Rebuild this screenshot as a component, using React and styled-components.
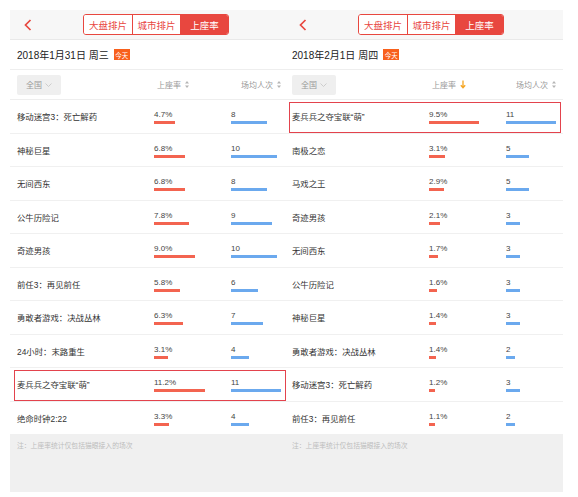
import styled, { createGlobalStyle } from "styled-components"

const GlobalStyle = createGlobalStyle`
  * { box-sizing: border-box; }
  body {
    margin: 0;
    background: #fff;
    font-family: "Liberation Sans", "Noto Sans CJK SC", sans-serif;
  }
`

const RED = "#e8473f"

const Page = styled.div`
  display: flex;
  padding: 10px 0 0 10px;
`
const Panel = styled.div`
  width: ${p => p.$w}px;
  display: flex;
  flex-direction: column;
`
const TopBar = styled.div`
  height: 30px;
  background: #f7f7f7;
  border-bottom: 1px solid #e9e9e9;
  display: grid;
  grid-template-columns: 1fr auto 1fr;
  align-items: center;
  padding-left: ${p => p.$pad + 7}px;
`
const Back = styled.svg`
  display: block;
`
const Segments = styled.div`
  display: flex;
  border: 1px solid ${RED};
  border-radius: 3px;
  overflow: hidden;
`
const Seg = styled.div`
  width: 48px;
  height: 19px;
  display: flex;
  align-items: center;
  justify-content: center;
  font-size: 9.5px;
  color: ${p => (p.$active ? "#fff" : RED)};
  background: ${p => (p.$active ? RED : "#fff")};
  & + & {
    border-left: 1px solid ${RED};
  }
`
const DateRow = styled.div`
  height: 30px;
  border-bottom: 1px solid #eeeeee;
  display: flex;
  align-items: center;
  padding-left: ${p => p.$pad}px;
  font-size: 10px;
  color: #222;
`
const Badge = styled.span`
  margin-left: 5px;
  width: 16px;
  height: 11px;
  background: #f8601c;
  color: #fff;
  font-size: 6.5px;
  display: inline-flex;
  align-items: center;
  justify-content: center;
`
const HeadRow = styled.div`
  height: 30px;
  border-bottom: 1px solid #eeeeee;
  display: grid;
  grid-template-columns: 137px 77px 1fr;
  align-items: center;
  padding-left: ${p => p.$pad}px;
  font-size: 8px;
  color: #999;
`
const Region = styled.div`
  width: 44px;
  height: 20px;
  background: #efefef;
  border-radius: 2px;
  display: flex;
  align-items: center;
  padding-left: 9px;
  gap: 3px;
  color: #999;
`
const HeadLabel = styled.div`
  display: flex;
  align-items: center;
  gap: 4px;
  padding-left: ${p => p.$indent}px;
`
const Row = styled.div`
  height: 33.5px;
  border-bottom: 1px solid #f0f0f0;
  display: grid;
  grid-template-columns: 137px 77px 1fr;
  padding-left: ${p => p.$pad}px;
  position: relative;
  ${p =>
    p.$hl &&
    `&::after {
      content: "";
      position: absolute;
      top: 2px; bottom: 0; left: ${p.$pad - 3}px; right: 2px;
      border: 1px solid #e3434d;
    }`}
`
const Name = styled.div`
  align-self: center;
  font-size: 8.4px;
  color: #333;
  white-space: nowrap;
`
const Cell = styled.div`
  padding-top: 11px;
  display: flex;
  flex-direction: column;
  align-items: flex-start;
`
const Value = styled.div`
  font-size: 8px;
  line-height: 8px;
  color: #444;
`
const Bar = styled.div`
  margin-top: 2px;
  height: 3px;
  width: ${p => p.$w}px;
  background: ${p => p.$color};
`
const Footer = styled.div`
  height: 57px;
  background: #f0f0f0;
  padding: 5px 0 0 ${p => p.$pad}px;
  font-size: 6.8px;
  color: #bdbdbd;
`

const SortIcon = () => (
  <svg width="4" height="7" viewBox="0 0 4 7">
    <path d="M2 0 L4 2.5 H0 Z M2 7 L4 4.5 H0 Z" fill="#b5b5b5" />
  </svg>
)

const DownArrow = () => (
  <svg width="6" height="9" viewBox="0 0 6 9">
    <path d="M3 0.5 V7.5 M0.8 5.3 L3 7.8 L5.2 5.3" stroke="#f5a623" strokeWidth="1.3" fill="none" />
  </svg>
)

const left = {
  date: "2018年1月31日 周三",
  rateScale: 4.55,
  pad: 7,
  width: 278,
  rateSort: "both",
  rows: [
    ["移动迷宫3：死亡解药", 4.7, 8],
    ["神秘巨星", 6.8, 10],
    ["无间西东", 6.8, 8],
    ["公牛历险记", 7.8, 9],
    ["奇迹男孩", 9.0, 10],
    ["前任3：再见前任", 5.8, 6],
    ["勇敢者游戏：决战丛林", 6.3, 7],
    ["24小时：末路重生", 3.1, 4],
    ["麦兵兵之夺宝联“萌”", 11.2, 11, true],
    ["绝命时钟2:22", 3.3, 4],
  ],
}

const right = {
  date: "2018年2月1日 周四",
  rateScale: 5.26,
  pad: 4,
  width: 275,
  rateSort: "down",
  rows: [
    ["麦兵兵之夺宝联“萌”", 9.5, 11, true],
    ["南极之恋", 3.1, 5],
    ["马戏之王", 2.9, 5],
    ["奇迹男孩", 2.1, 3],
    ["无间西东", 1.7, 3],
    ["公牛历险记", 1.6, 3],
    ["神秘巨星", 1.4, 3],
    ["勇敢者游戏：决战丛林", 1.4, 2],
    ["移动迷宫3：死亡解药", 1.2, 3],
    ["前任3：再见前任", 1.1, 2],
  ],
}

const Day = ({ data }) => (
  <Panel $w={data.width}>
    <TopBar $pad={data.pad}>
      <Back width="8" height="12" viewBox="0 0 8 12">
        <path d="M6.5 1 L1.5 6 L6.5 11" stroke={RED} strokeWidth="1.7" fill="none" />
      </Back>
      <Segments>
        <Seg>大盘排片</Seg>
        <Seg>城市排片</Seg>
        <Seg $active>上座率</Seg>
      </Segments>
      <div />
    </TopBar>
    <DateRow $pad={data.pad}>
      {data.date}
      <Badge>今天</Badge>
    </DateRow>
    <HeadRow $pad={data.pad}>
      <Region>
        全国
        <svg width="7" height="4" viewBox="0 0 7 4">
          <path d="M0.5 0.5 L3.5 3.5 L6.5 0.5" stroke="#c4c4c4" strokeWidth="0.8" fill="none" />
        </svg>
      </Region>
      <HeadLabel $indent={3}>
        上座率 {data.rateSort === "down" ? <DownArrow /> : <SortIcon />}
      </HeadLabel>
      <HeadLabel $indent={10}>
        场均人次 <SortIcon />
      </HeadLabel>
    </HeadRow>
    {data.rows.map(([name, rate, count, hl]) => (
      <Row key={name} $pad={data.pad} $hl={hl}>
        <Name>{name}</Name>
        <Cell>
          <Value>{rate.toFixed(1)}%</Value>
          <Bar $w={Math.round(rate * data.rateScale)} $color="#f36450" />
        </Cell>
        <Cell>
          <Value>{count}</Value>
          <Bar $w={Math.round(count * 4.55)} $color="#6ba9ee" />
        </Cell>
      </Row>
    ))}
    <Footer $pad={data.pad}>注：上座率统计仅包括猫眼接入的场次</Footer>
  </Panel>
)

const App = () => (
  <>
    <GlobalStyle />
    <Page>
      <Day data={left} />
      <Day data={right} />
    </Page>
  </>
)

export default App
